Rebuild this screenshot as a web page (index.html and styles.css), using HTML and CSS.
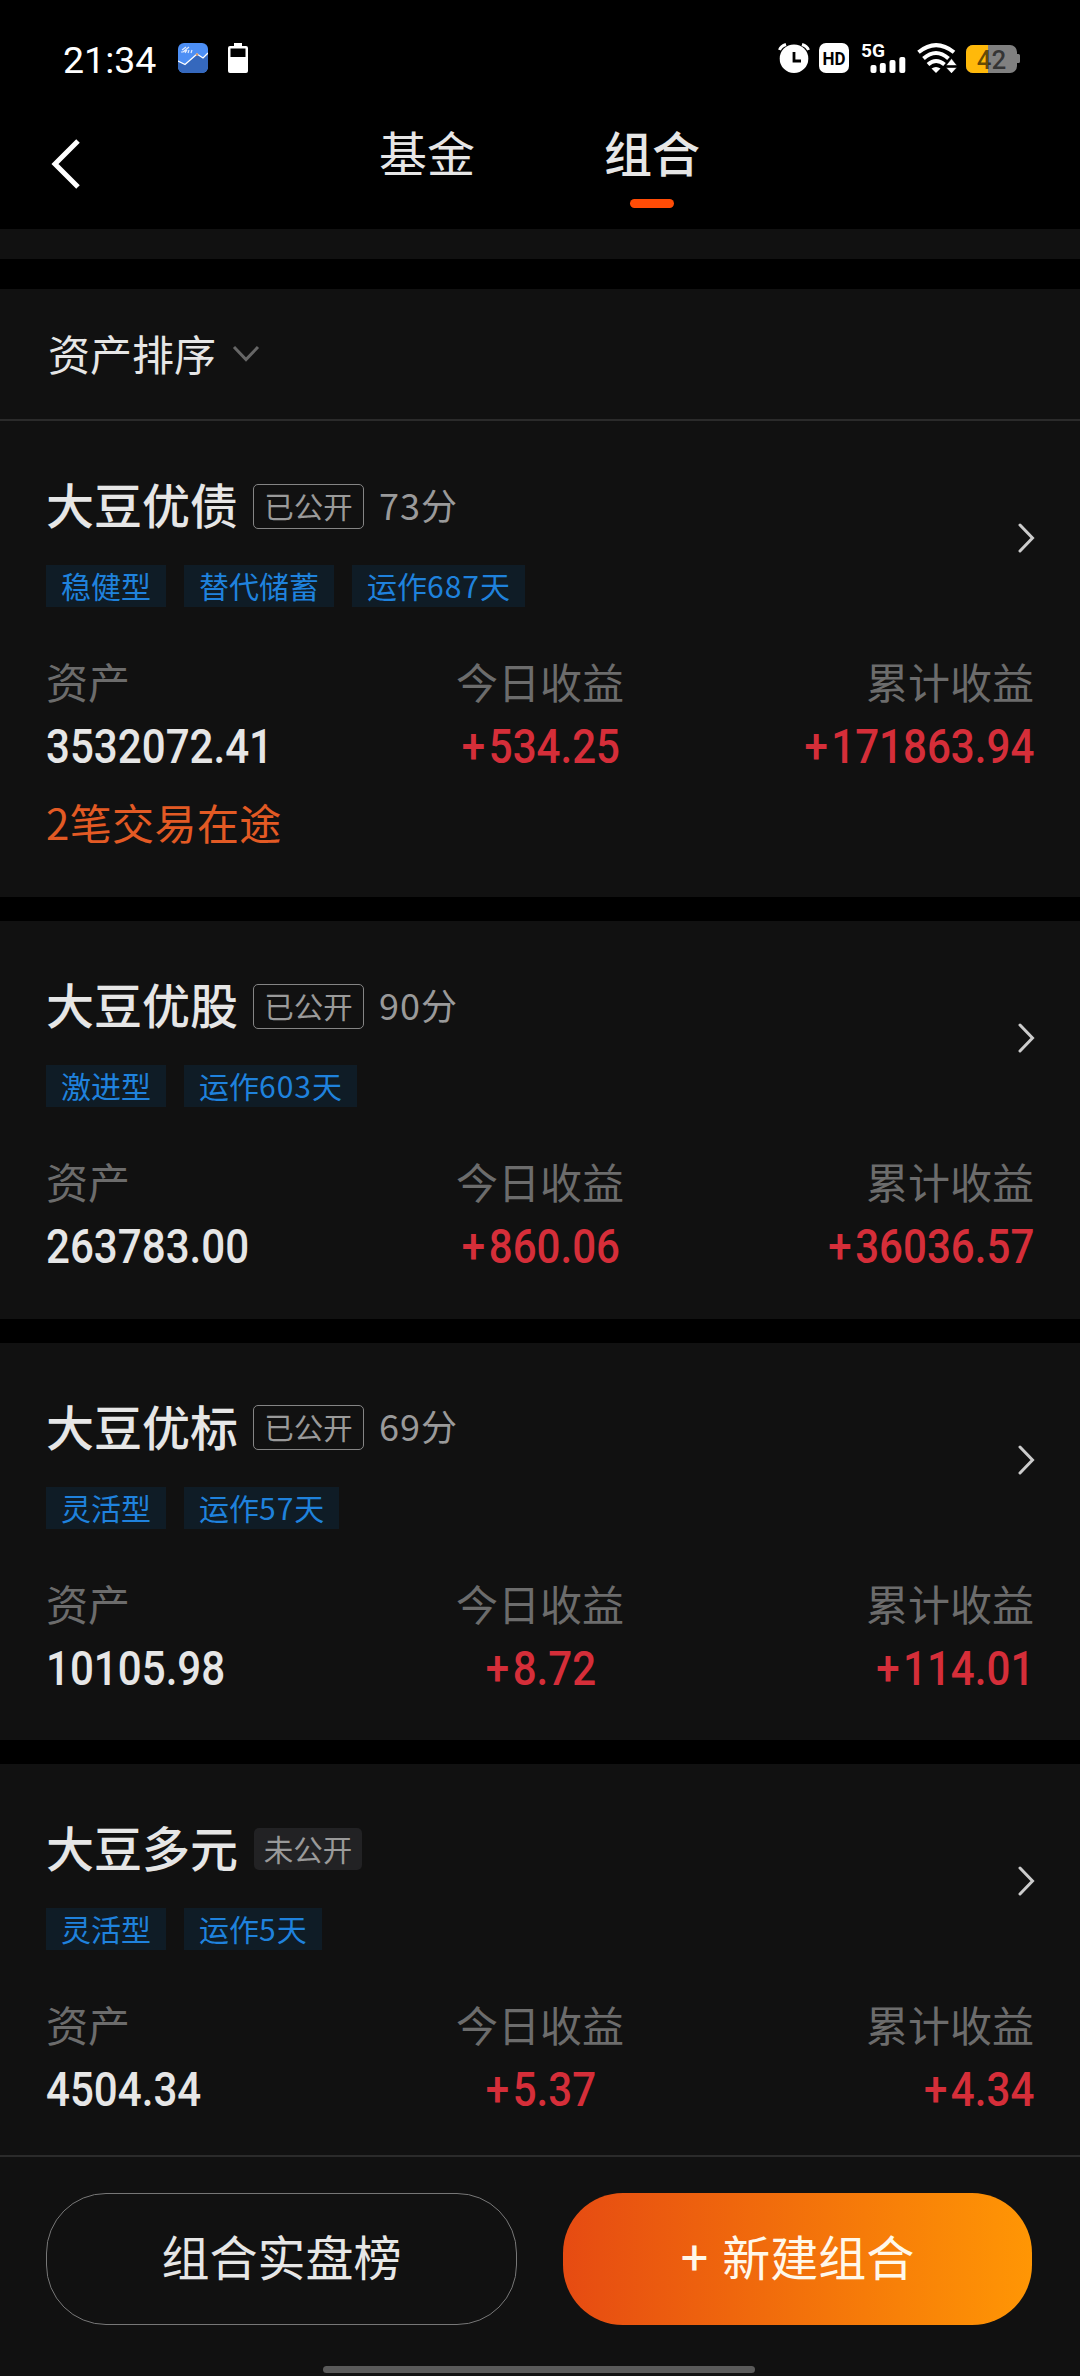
FILE: index.html
```
<!DOCTYPE html>
<html lang="zh-CN">
<head>
	<meta charset="UTF-8">
	<meta name="viewport" content="width=device-width, initial-scale=1.0">
	<title>组合</title>
	<link rel="stylesheet" href="styles.css">
</head>
<body>
	<div class="wrapper">
	<div class="status">
		<span class="time">21:34</span>
		<svg class="status-app" width="30" height="30" viewBox="0 0 30 30">
			<rect width="30" height="30" rx="6" fill="#4d8ff5"/>
			<path d="M0 18L7 21.500L19 11L25 15L30 10V24a6 6 0 0 1-6 6H6a6 6 0 0 1-6-6z" fill="#3568bd"/>
			<path d="M0 18L7 21.500L19 11L25 15L30 10" fill="none" stroke="#fff" stroke-width="1.300"/>
			<path d="M4 7l4-3M5 9l6-5M3 9l5-1M7 10l2-3M10 10l1-3M13 10l1-3" stroke="#dfeaff" stroke-width="1.200"/>
			<circle cx="19" cy="11.500" r="1.300" fill="#d79a6a"/>
		</svg>
		<svg class="status-cell" width="20" height="30" viewBox="0 0 20 30">
			<path d="M6 0h8v3h4a2 2 0 0 1 2 2v23a2 2 0 0 1-2 2H2a2 2 0 0 1-2-2V5a2 2 0 0 1 2-2h4z" fill="#fff"/>
			<rect x="2.500" y="5.500" width="15" height="8.500" fill="#000"/>
		</svg>
		<div class="status-right">
			<svg width="32" height="30" viewBox="0 0 32 30">
				<circle cx="16" cy="15.700" r="14.300" fill="#fff"/>
				<path d="M1.500 7Q3 3 8 1.500M30.500 7Q29 3 24 1.500" fill="none" stroke="#fff" stroke-width="3"/>
				<path d="M16 9v9h7" fill="none" stroke="#000" stroke-width="2.800"/>
			</svg>
			<svg class="hd" width="30" height="30" viewBox="0 0 30 30">
				<rect width="30" height="30" rx="7" fill="#fff"/>
				<text class="hd-text" x="15" y="21.500" text-anchor="middle" textLength="23" lengthAdjust="spacingAndGlyphs">HD</text>
			</svg>
			<svg class="signal" width="46" height="34" viewBox="0 -4 46 34">
				<text class="net-text" x="0" y="14.200" textLength="24" lengthAdjust="spacingAndGlyphs">5G</text>
				<g fill="#fff">
					<rect x="9.500" y="22" width="6" height="8" rx="2"/>
					<rect x="18.800" y="20" width="6" height="10" rx="2"/>
					<rect x="28.500" y="17" width="6" height="13" rx="2"/>
					<rect x="38.300" y="14" width="6" height="16" rx="2"/>
				</g>
			</svg>
			<svg class="wifi" width="40" height="30" viewBox="0 0 40 30">
				<g fill="none" stroke="#fff" stroke-width="4">
					<path d="M1.500 9.300Q19 -5 37 9.300"/>
					<path d="M6.500 15.500Q19 4.500 31.500 15.500"/>
					<path d="M11 21.500Q19 14.500 27.500 21.500"/>
				</g>
				<path d="M14.500 25.500Q19 22.500 23.500 25.500L19 30z" fill="#fff"/>
				<path d="M29 22.500L34.500 15.500L40 22.500zM29 24.500H40L34.500 30.500z" fill="#fff" stroke="#000" stroke-width=".600"/>
			</svg>
			<svg class="battery" width="55" height="28" viewBox="0 0 55 28">
				<path d="M7 0H44a7 7 0 0 1 7 7v2h1.500a1.500 1.500 0 0 1 1.500 1.500v6a1.500 1.500 0 0 1-1.500 1.500H51v3a7 7 0 0 1-7 7H7a7 7 0 0 1-7-7V7a7 7 0 0 1 7-7z" fill="#808080"/>
				<path d="M7 0H22V28H7a7 7 0 0 1-7-7V7a7 7 0 0 1 7-7z" fill="#ffb90a"/>
				<text class="battery-text" x="25.500" y="23.500" text-anchor="middle">42</text>
			</svg>
		</div>
	</div>
	<header class="header">
		<svg class="back" width="30" height="52" viewBox="0 0 30 52">
			<path d="M27 3L4 26L27 49" fill="none" stroke="#fff" stroke-width="5"/>
		</svg>
		<nav class="tabs">
			<a class="tab">基金</a>
			<a class="tab active">组合</a>
		</nav>
	</header>
	<div class="strip"></div>
	<main class="main">
		<div class="sort">
			<span class="sort-text">资产排序</span>
			<svg width="28" height="18" viewBox="0 0 28 18">
				<path d="M2 2L14 14.500L26 2" fill="none" stroke="#666" stroke-width="3"/>
			</svg>
		</div>

		<section class="card">
			<div class="card-title">
				<h2 class="name">大豆优债</h2>
				<span class="badge">已公开</span>
				<span class="score">73分</span>
			</div>
			<div class="tags">
				<span class="tag">稳健型</span>
				<span class="tag">替代储蓄</span>
				<span class="tag">运作<i>687</i>天</span>
			</div>
			<div class="stats">
				<div class="stat"><p class="label">资产</p><p class="value">3532072.41</p></div>
				<div class="stat"><p class="label">今日收益</p><p class="value up">+534.25</p></div>
				<div class="stat"><p class="label">累计收益</p><p class="value up">+171863.94</p></div>
			</div>
			<p class="transit">2笔交易在途</p>
			<svg class="arrow" width="18" height="30" viewBox="0 0 18 30"><path d="M2 2L14.500 15L2 28" /></svg>
		</section>

		<section class="card">
			<div class="card-title">
				<h2 class="name">大豆优股</h2>
				<span class="badge">已公开</span>
				<span class="score">90分</span>
			</div>
			<div class="tags">
				<span class="tag">激进型</span>
				<span class="tag">运作<i>603</i>天</span>
			</div>
			<div class="stats">
				<div class="stat"><p class="label">资产</p><p class="value">263783.00</p></div>
				<div class="stat"><p class="label">今日收益</p><p class="value up">+860.06</p></div>
				<div class="stat"><p class="label">累计收益</p><p class="value up">+36036.57</p></div>
			</div>
			<svg class="arrow" width="18" height="30" viewBox="0 0 18 30"><path d="M2 2L14.500 15L2 28" /></svg>
		</section>

		<section class="card">
			<div class="card-title">
				<h2 class="name">大豆优标</h2>
				<span class="badge">已公开</span>
				<span class="score">69分</span>
			</div>
			<div class="tags">
				<span class="tag">灵活型</span>
				<span class="tag">运作<i>57</i>天</span>
			</div>
			<div class="stats">
				<div class="stat"><p class="label">资产</p><p class="value">10105.98</p></div>
				<div class="stat"><p class="label">今日收益</p><p class="value up">+8.72</p></div>
				<div class="stat"><p class="label">累计收益</p><p class="value up">+114.01</p></div>
			</div>
			<svg class="arrow" width="18" height="30" viewBox="0 0 18 30"><path d="M2 2L14.500 15L2 28" /></svg>
		</section>

		<section class="card">
			<div class="card-title">
				<h2 class="name">大豆多元</h2>
				<span class="badge closed">未公开</span>
			</div>
			<div class="tags">
				<span class="tag">灵活型</span>
				<span class="tag">运作<i>5</i>天</span>
			</div>
			<div class="stats">
				<div class="stat"><p class="label">资产</p><p class="value">4504.34</p></div>
				<div class="stat"><p class="label">今日收益</p><p class="value up">+5.37</p></div>
				<div class="stat"><p class="label">累计收益</p><p class="value up">+4.34</p></div>
			</div>
			<svg class="arrow" width="18" height="30" viewBox="0 0 18 30"><path d="M2 2L14.500 15L2 28" /></svg>
		</section>
	</main>
	<footer class="footer">
		<div class="buttons">
			<button class="btn">组合实盘榜</button>
			<button class="btn btn-new"><span class="plus">+</span>新建组合</button>
		</div>
		<div class="home-bar"></div>
	</footer>
	</div>
</body>
</html>
```

FILE: styles.css
```
*{
	box-sizing: border-box;
	margin: 0;
	padding: 0;
}

body {
	background-color: #000;
	color: #e6e6e6;
	font-family: "Noto Sans CJK SC", sans-serif;
}

.wrapper {
	display: flex;
	flex-direction: column;
	width: 1080px;
	height: 2376px;
	overflow: hidden;
}

/* status bar */
.status {
	display: flex;
	align-items: center;
	height: 116px;
	padding: 0 59px 0 63px;
	flex-shrink: 0;
}

.time {
	width: 115px;
	font: 37.5px/44px Roboto, sans-serif;
	color: #fff;
	padding-top: 4px;
}

.status-cell {
	margin-left: 20px;
}

.status-right {
	display: flex;
	align-items: center;
	margin-left: auto;
}

.hd {
	margin-left: 9px;
}

.hd-text {
	font: bold 18px Roboto, sans-serif;
	fill: #000;
}

.signal {
	margin: -4px 0 0 12px;
}

.net-text {
	font: bold 19px Roboto, sans-serif;
	fill: #fff;
}

.wifi {
	margin-left: 10px;
}

.battery {
	margin: 2px 0 0 9px;
}

.battery-text {
	font: 500 26px Roboto, sans-serif;
	fill: #000;
	fill-opacity: .6;
}

/* header */
.header {
	display: flex;
	height: 113px;
	flex-shrink: 0;
	padding-left: 51px;
}

.back {
	margin-top: 22px;
}

.tabs {
	display: flex;
	gap: 129px;
	margin-left: 298px;
}

.tab {
	display: flex;
	flex-direction: column;
	align-items: center;
	font-size: 48px;
	line-height: 70px;
}

.active {
	font-weight: 500;
}

.active::after {
	content: "";
	width: 44px;
	height: 9px;
	margin-top: 13px;
	border-radius: 5px;
	background-color: #ff4c06;
}

.strip {
	height: 30px;
	margin-bottom: 30px;
	flex-shrink: 0;
	background-color: #111;
}

/* list */
.main {
	flex: 1;
	min-height: 0;
	overflow: hidden;
}

.sort {
	display: flex;
	align-items: center;
	gap: 16px;
	height: 132px;
	padding-left: 48px;
	border-bottom: 2px solid #2b2b2b;
	background-color: #111;
	font-size: 42px;
}

.sort-text {
	padding-bottom: 4px;
}

.card {
	position: relative;
	padding: 54px 46px 40.5px;
	margin-bottom: 24px;
	background-color: #111;
}

.card-title {
	display: flex;
	align-items: center;
	height: 62px;
}

.name {
	font-size: 48px;
	font-weight: 500;
	width: 192px;
	margin-right: 15px;
	padding-bottom: 6px;
}

.badge {
	width: 111px;
	height: 45px;
	border: 1px solid #858585;
	border-radius: 5px;
	font-size: 29.5px;
	line-height: 40px;
	text-align: center;
	color: #9a9a9a;
}

.closed {
	width: 108px;
	height: 42px;
	margin-left: 1px;
	border: none;
	background-color: #222224;
}

.score {
	margin-left: 15px;
	padding-bottom: 5px;
	font-size: 36px;
	letter-spacing: 1px;
	color: #9a9a9a;
}

.tags {
	display: flex;
	gap: 18px;
	margin-top: 28px;
}

.tag {
	height: 42px;
	padding: 0 15px;
	font-size: 30px;
	line-height: 40px;
	color: #1f82dd;
	background-color: #0f1c26;
}

.tag i {
	font-style: normal;
	letter-spacing: 1px;
}

.stats {
	display: grid;
	grid-template-columns: 1fr 1fr 1fr;
	margin-top: 46px;
}

.stat:nth-child(2) {
	text-align: center;
}

.stat:nth-child(3) {
	text-align: right;
}

.label {
	height: 60px;
	font-size: 42px;
	line-height: 56px;
	color: #6c6c6c;
}

/* narrow digits */
.value {
	height: 65px;
	font: 500 48.5px/68px Roboto, sans-serif;
	transform: scaleX(.868);
	transform-origin: left;
}

.stat:nth-child(2) .value {
	padding-left: 3px;
	transform-origin: center;
}

.stat:nth-child(3) .value {
	transform-origin: right;
}

.up {
	color: #d52e39;
}

.up::first-letter {
	letter-spacing: 4px;
}

.transit {
	margin: 14px 0 4.5px;
	font-size: 42px;
	line-height: 60px;
	letter-spacing: .4px;
	color: #e35a24;
}

.arrow {
	position: absolute;
	top: 102px;
	right: 44px;
	fill: none;
	stroke: #ccc;
	stroke-width: 3;
	stroke-linecap: round;
}

/* bottom buttons */
.footer {
	height: 221px;
	flex-shrink: 0;
	padding: 36px 48px 0 46px;
	border-top: 2px solid #2b2b2b;
	background-color: #111;
}

.buttons {
	display: flex;
	gap: 46px;
}

.btn {
	flex: 1 1 0;
	height: 132px;
	padding-bottom: 8px;
	border: 1px solid #777;
	border-radius: 60px;
	background: none;
	color: #e6e6e6;
	font: 48px "Noto Sans CJK SC", sans-serif;
}

.btn-new {
	border: none;
	background: linear-gradient(90deg, #e64b12, #ff9604);
	color: #fff8ea;
}

.plus {
	margin-right: 14px;
	font-weight: 500;
}

.home-bar {
	width: 432px;
	height: 7px;
	margin: 41px auto 0;
	border-radius: 4px;
	background-color: #5a5a5a;
}
```
